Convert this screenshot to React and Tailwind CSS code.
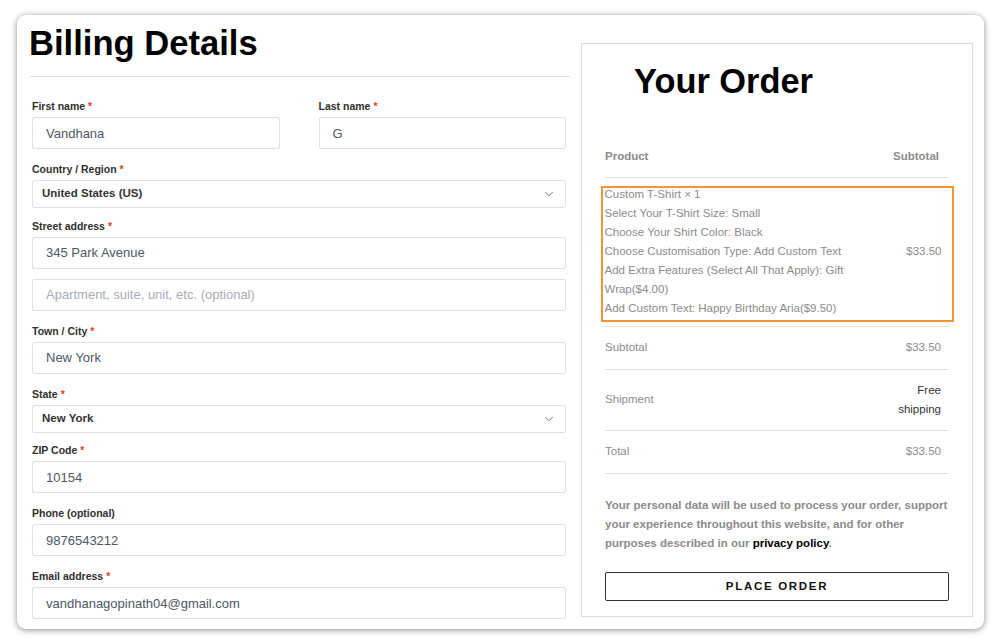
import { ChevronDown } from "lucide-react";

const Label = ({ children, required, className = "" }) => (
  <div className={"h-[14px] leading-[14px] text-[10.5px] font-bold text-[#2f2f2f] mb-[4px] " + className}>
    {children}
    {required && <span className="text-[#e2401c] ml-[3px]">*</span>}
  </div>
);

const Field = ({ value, placeholder }) => (
  <input
    readOnly
    defaultValue={value}
    placeholder={placeholder}
    className="block w-full h-[32px] border border-[#e1e1e1] rounded-[2px] bg-white pl-[13px] text-[13px] text-[#4d5766] placeholder:text-[#a6acb6] outline-none font-['Liberation_Sans',Arial,sans-serif]"
  />
);

const Select = ({ value }) => (
  <div className="flex items-center justify-between h-[28px] border border-[#e1e1e1] rounded-[2px] bg-white pl-[9px] pr-[9px]">
    <span className="text-[11.5px] font-bold text-[#333]">{value}</span>
    <ChevronDown size={14} strokeWidth={1.5} className="text-[#666]" />
  </div>
);

const details = [
  "Custom T-Shirt × 1",
  "Select Your T-Shirt Size: Small",
  "Choose Your Shirt Color: Black",
  "Choose Customisation Type: Add Custom Text",
  "Add Extra Features (Select All That Apply): Gift",
  "Wrap($4.00)",
  "Add Custom Text: Happy Birthday Aria($9.50)",
];

export default function App() {
  return (
    <div className="w-[1000px] h-[641px] bg-white pt-[15px] pl-[17px] font-['Liberation_Sans',Arial,sans-serif]">
      <div className="w-[967px] h-[614px] bg-white rounded-[9px] shadow-[0_1px_6px_rgba(0,0,0,0.45)] flex overflow-hidden">
        {/* billing */}
        <div className="ml-[13px] w-[540px] pt-[11px]">
          <h1 className="text-[34.6px] leading-none h-[34px] font-bold text-black -ml-[1px]">Billing Details</h1>
          <div className="mt-[16px] border-t border-[#dedede]" />

          <div className="pl-[2px] pr-[4px]">
            <div className="grid grid-cols-2 gap-x-[39px] mt-[22px]">
              <div>
                <Label required>First name</Label>
                <Field value="Vandhana" />
              </div>
              <div>
                <Label required>Last name</Label>
                <Field value="G" />
              </div>
            </div>

            <Label required className="mt-[13px]">Country / Region</Label>
            <Select value="United States (US)" />

            <Label required className="mt-[10.5px]">Street address</Label>
            <Field value="345 Park Avenue" />
            <div className="mt-[10px]">
              <Field placeholder="Apartment, suite, unit, etc. (optional)" />
            </div>

            <Label required className="mt-[13px]">Town / City</Label>
            <Field value="New York" />

            <Label required className="mt-[13px]">State</Label>
            <Select value="New York" />

            <Label required className="mt-[10.5px]">ZIP Code</Label>
            <Field value="10154" />

            <Label className="mt-[13px]">Phone (optional)</Label>
            <Field value="9876543212" />

            <Label required className="mt-[13px]">Email address</Label>
            <Field value="vandhanagopinath04@gmail.com" />
          </div>
        </div>

        {/* order */}
        <div className="ml-[11px] mt-[28px] self-start w-[392px] border border-[#dcdcdc] px-[23px] pt-[20px] pb-[15px] text-[11.5px]">
          <h2 className="ml-[29px] text-[34.4px] leading-none h-[34px] font-bold text-black">Your Order</h2>

          <div className="mt-[49px] flex justify-between leading-[19px] pb-[11px] pr-[10px] border-b border-[#e2e2e2] font-bold text-[#8c8c8c]">
            <span>Product</span>
            <span>Subtotal</span>
          </div>

          <div className="pt-[8px] pb-[4px] border-b border-[#e2e2e2]">
            <div className="-ml-[4px] -mr-[5px] h-[136px] border-[2.5px] border-[#f39536] pl-[1.5px] pr-[10.5px] flex items-center justify-between text-[#8c8c8c]">
              <div className="-mt-[5px] leading-[19px]">
                {details.map((d) => (
                  <div key={d}>{d}</div>
                ))}
              </div>
              <span className="-mt-[5px]">$33.50</span>
            </div>
          </div>

          <div className="h-[43px] flex items-center justify-between pr-[8px] border-b border-[#e2e2e2] text-[#8c8c8c]">
            <span>Subtotal</span>
            <span>$33.50</span>
          </div>
          <div className="h-[61px] flex items-center justify-between pr-[8px] border-b border-[#e2e2e2]">
            <span className="text-[#8c8c8c]">Shipment</span>
            <span className="text-right leading-[19px] text-[#333]">
              Free
              <br />
              shipping
            </span>
          </div>
          <div className="h-[43px] flex items-center justify-between pr-[8px] border-b border-[#e2e2e2] text-[#8c8c8c]">
            <span>Total</span>
            <span>$33.50</span>
          </div>

          <p className="mt-[22px] text-[11.5px] leading-[19px] font-bold text-[#8c8c8c]">
            Your personal data will be used to process your order, support
            <br />
            your experience throughout this website, and for other
            <br />
            purposes described in our <span className="text-black">privacy policy</span>.
          </p>

          <button className="mt-[19px] w-full h-[29px] border border-[#333] rounded-[2px] text-[11.5px] font-bold tracking-[1.7px] text-[#111]">
            PLACE ORDER
          </button>
        </div>
      </div>
    </div>
  );
}
